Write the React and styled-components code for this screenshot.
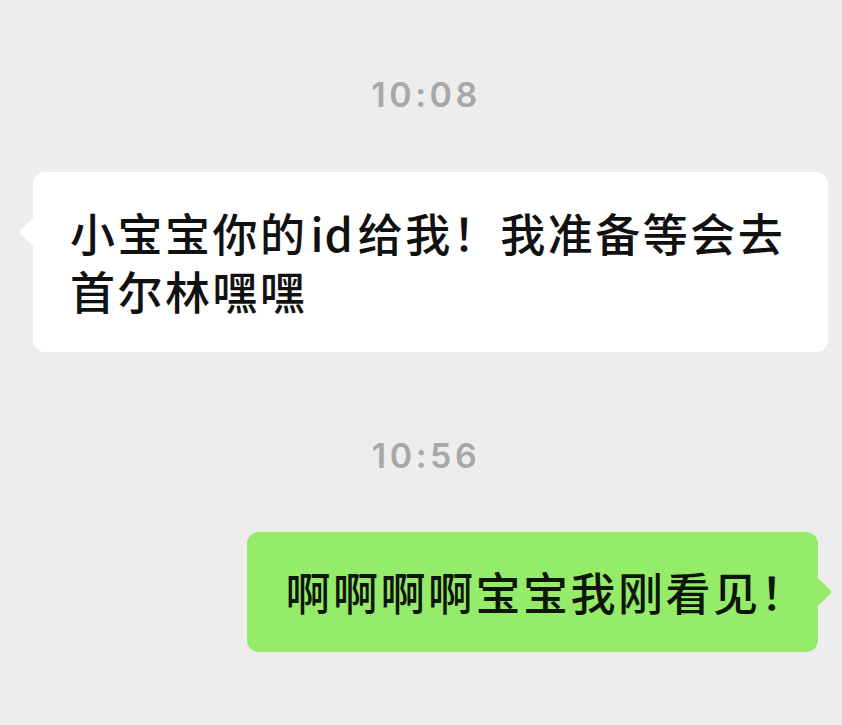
import React from "react";
import styled, { createGlobalStyle } from "styled-components";

const GlobalStyle = createGlobalStyle`
  html, body {
    margin: 0;
    padding: 0;
    background: #ededed;
  }
  body {
    font-family: "Noto Sans CJK SC", "Noto Sans", sans-serif;
  }
`;

const Page = styled.div`
  width: 842px;
  height: 725px;
  overflow: hidden;
  background: #ededed;
  display: flex;
  flex-direction: column;
  padding-top: 71px;
  box-sizing: border-box;
`;

const TimeStamp = styled.div`
  text-align: center;
  font-family: Inter, "Noto Sans", sans-serif;
  font-size: 34px;
  font-weight: 600;
  line-height: 48px;
  letter-spacing: 3.5px;
  padding-left: 10px;
  color: #a8a8a8;
  margin-bottom: ${(p) => p.$gap}px;
`;

const Row = styled.div`
  display: flex;
  justify-content: ${(p) => (p.$mine ? "flex-end" : "flex-start")};
  padding: ${(p) => (p.$mine ? "0 24px 0 0" : "0 14px 0 33px")};
  margin-bottom: ${(p) => p.$gap}px;
`;

const Bubble = styled.div`
  position: relative;
  box-sizing: border-box;
  padding: ${(p) => (p.$mine ? "31px 10px 31px 38px" : "32px 30px 32px 37px")};
  border-radius: 12px;
  background: ${(p) => (p.$mine ? "#95ec69" : "#ffffff")};
  color: ${(p) => (p.$mine ? "#0e160a" : "#111111")};
  font-family: "Noto Sans CJK SC", sans-serif;
  font-size: 45px;
  font-weight: 500;
  line-height: 58px;
  letter-spacing: 2.5px;

  &::before {
    content: "";
    position: absolute;
    top: 50px;
    ${(p) => (p.$mine ? "right: -10px;" : "left: -10px;")}
    width: 20px;
    height: 20px;
    border-radius: 3px;
    background: inherit;
    transform: rotate(45deg);
  }
`;

const Latin = styled.span`
  padding: 0 4px 0 3px;
  letter-spacing: 1px;
`;

export default function App() {
  return (
    <Page>
      <GlobalStyle />
      <TimeStamp $gap={53}>10:08</TimeStamp>
      <Row $gap={80}>
        <Bubble>
          小宝宝你的<Latin>id</Latin>给我！我准备等会去首尔林嘿嘿
        </Bubble>
      </Row>
      <TimeStamp $gap={52}>10:56</TimeStamp>
      <Row $mine>
        <Bubble $mine>啊啊啊啊宝宝我刚看见！</Bubble>
      </Row>
    </Page>
  );
}
